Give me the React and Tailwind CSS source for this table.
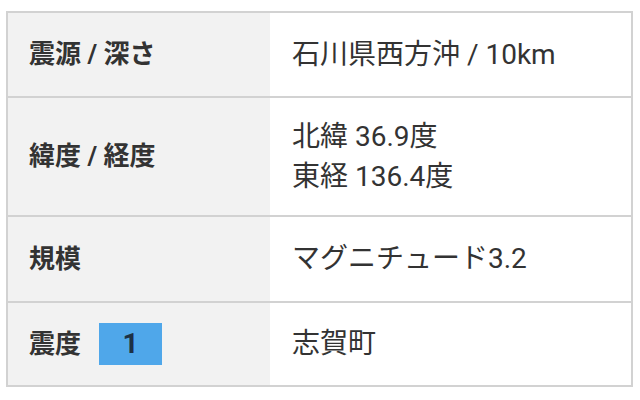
import React from "react"

const rows = [
  { label: "震源 / 深さ", value: ["石川県西方沖 / 10km"], h: "h-[83px]" },
  { label: "緯度 / 経度", value: ["北緯 36.9度", "東経 136.4度"], h: "h-[119px]" },
  { label: "規模", value: ["マグニチュード3.2"], h: "h-[86px]" },
  { label: "震度", value: ["志賀町"], h: "h-[84px]", badge: "1" },
]

export default function App() {
  return (
    <div
      className="w-[640px] h-[400px] bg-white pt-[11px] pl-[6px]"
      style={{ fontFamily: "Roboto, 'Noto Sans CJK JP', sans-serif" }}
    >
      <div className="w-[627px] border-2 border-[#d2d2d2]">
        {rows.map((row, i) => (
          <div
            key={row.label}
            className={`flex ${row.h} ${i > 0 ? "border-t-2 border-[#d2d2d2]" : ""}`}
          >
            <div className="w-[262px] bg-[#f2f2f2] flex items-center pl-[21px] text-[26px] font-bold text-[#333333]">
              <span>{row.label}</span>
              {row.badge && (
                <span className="ml-[18px] w-[63px] h-[42px] bg-[#4fa7ea] flex items-center justify-center text-[#1d3145] text-[28px] font-bold">
                  {row.badge}
                </span>
              )}
            </div>
            <div className="flex-1 flex flex-col justify-center pl-[22px] text-[28px] leading-[40px] text-[#333333]">
              {row.value.map(v => (
                <div key={v}>{v}</div>
              ))}
            </div>
          </div>
        ))}
      </div>
    </div>
  )
}
